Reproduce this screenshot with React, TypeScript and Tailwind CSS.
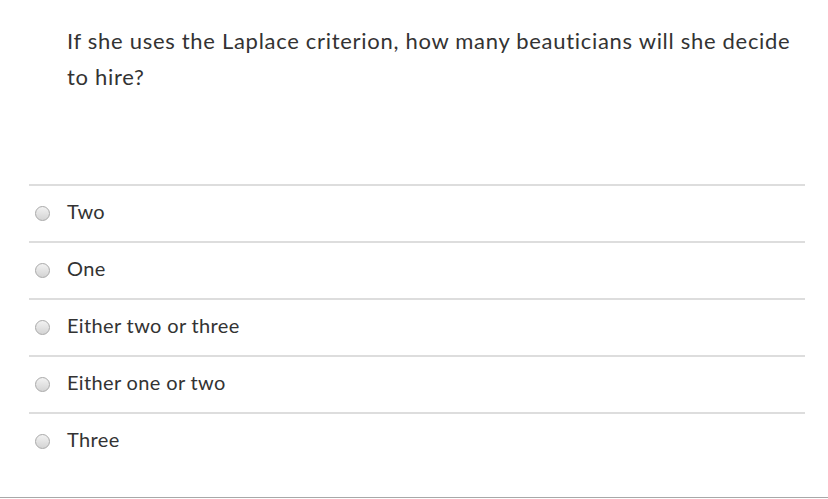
const options = ["Two", "One", "Either two or three", "Either one or two", "Three"]

const Radio = () => (
    <span className="block w-[15px] h-[15px] rounded-full border border-[#a9a9a9] bg-gradient-to-b from-[#f2f2f2] to-[#d4d4d4] shrink-0" />
)

export default function App() {
    return (
        <div className="w-[828px] h-[499px] bg-white text-[#333] font-['Lato','Liberation_Sans',sans-serif] overflow-hidden">

            <div className="pl-[67px] pt-[23px] w-[800px] text-[22px] leading-[36px] tracking-[0.7px]">
                If she uses the Laplace criterion, how many beauticians will she decide to hire?
            </div>

            <ul className="ml-[29px] w-[776px] mt-[89px]">
                {options.map((opt, i) => (
                    <li key={i} className="h-[57px] border-t-2 border-[#dddddd] flex items-center">
                        <div className="pl-[6px] flex items-center gap-[17px]">
                            <Radio />
                            <span className="text-[20px] leading-[24px] tracking-[0.35px] pb-[5px]">{opt}</span>
                        </div>
                    </li>
                ))}
            </ul>

            <div className="mt-[28px] border-t border-[#a8a8a8]" />
        </div>
    )
}
